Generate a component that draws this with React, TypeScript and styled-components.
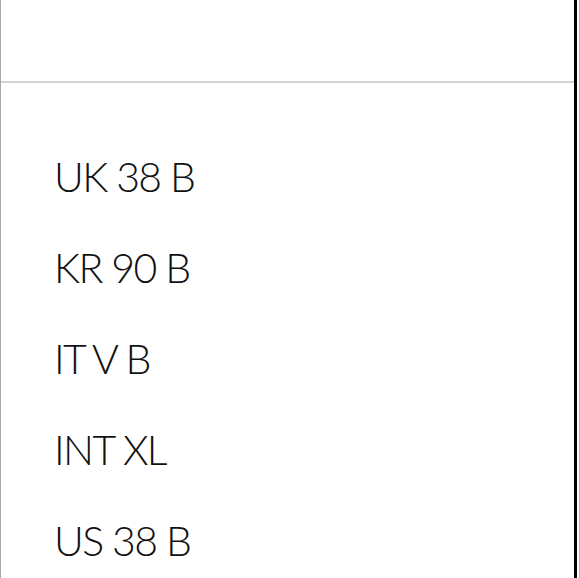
import React from 'react'
import styled, { createGlobalStyle } from 'styled-components'

const GlobalStyle = createGlobalStyle`
    html, body {
        margin: 0;
        padding: 0;
        background: #ffffff;
    }
    body {
        font-family: Lato, 'Liberation Sans', sans-serif;
        color: #111111;
    }
`

const Frame = styled.div`
    display: flex;
    width: 580px;
    height: 578px;
    overflow: hidden;
    box-sizing: border-box;
    border-right: 1px solid #b8b8b8;
`

const Panel = styled.div`
    flex: 1;
    display: flex;
    flex-direction: column;
    border-left: 1px solid #a8a8a8;
    border-right: 3px solid #000000;
    margin-right: 2px;
`

const Header = styled.div`
    height: 81px;
    flex-shrink: 0;
    border-bottom: 2px solid #d2d2d2;
`

const List = styled.ul`
    list-style: none;
    margin: 0;
    padding: 48px 0 0 53px;
`

const Item = styled.li`
    font-size: 41px;
    line-height: 91px;
    height: 91px;
    font-weight: 300;
    letter-spacing: -1.6px;
`

const sizes = ['UK 38 B', 'KR 90 B', 'IT V B', 'INT XL', 'US 38 B']

export default function App() {
    return (
        <>
            <GlobalStyle />
            <Frame>
                <Panel>
                    <Header />
                    <List>
                        {sizes.map((s) => (
                            <Item key={s}>{s}</Item>
                        ))}
                    </List>
                </Panel>
            </Frame>
        </>
    )
}
